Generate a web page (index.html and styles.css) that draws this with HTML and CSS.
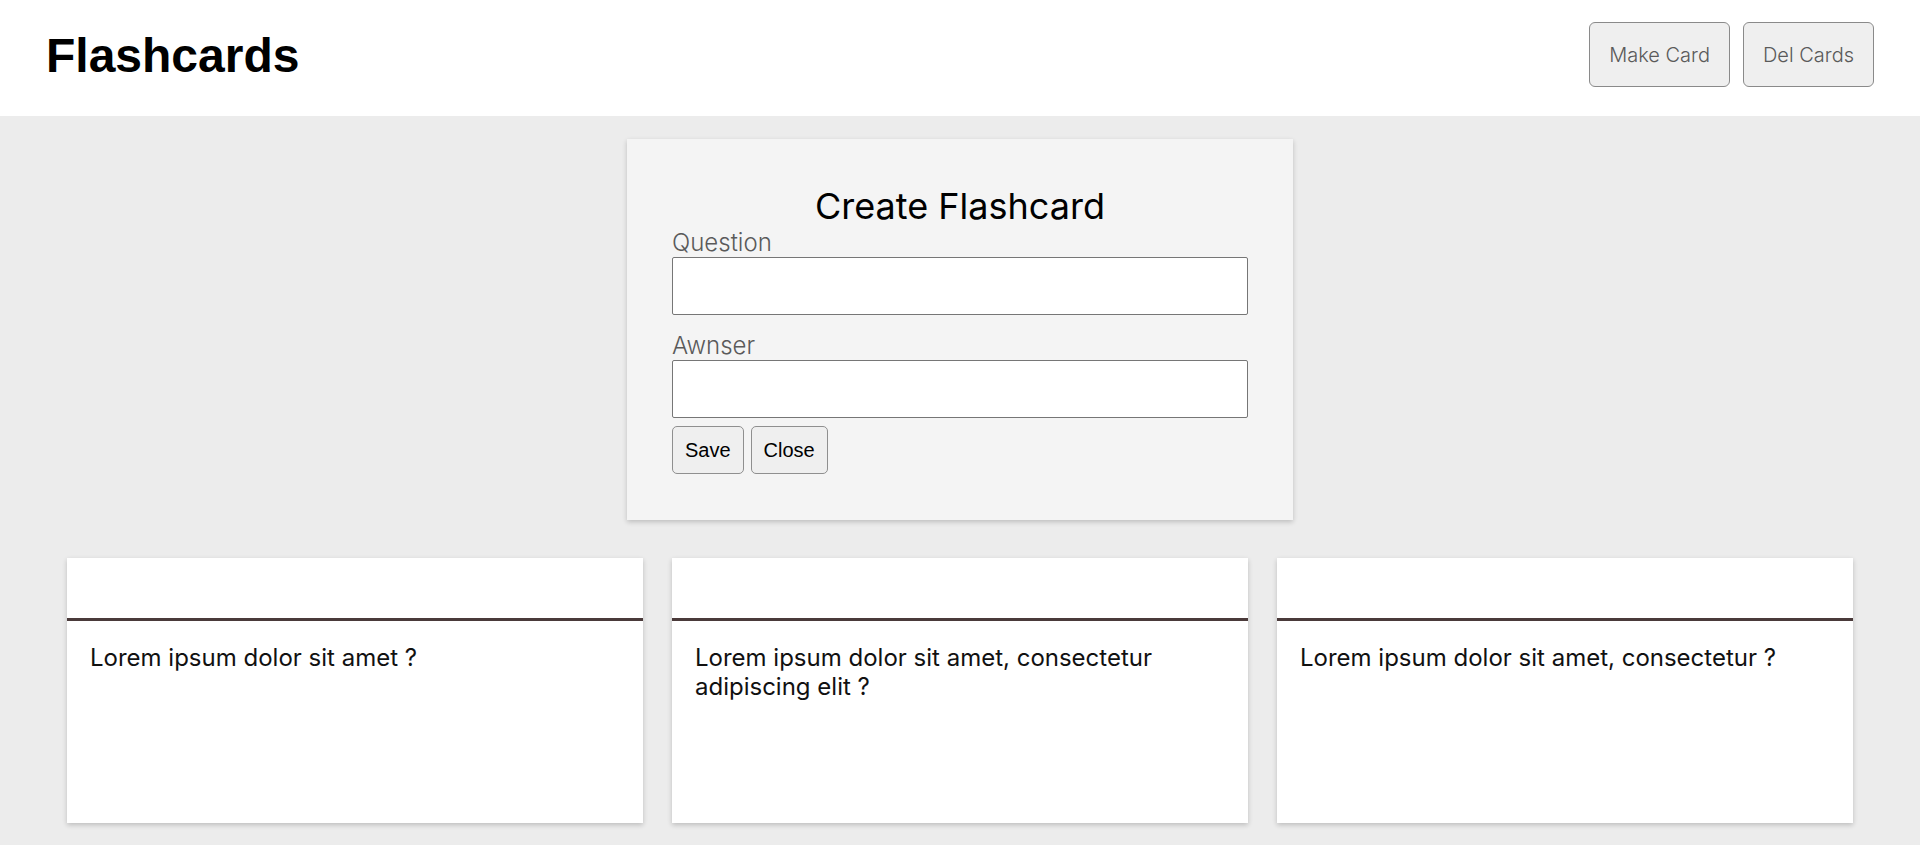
FILE: index.html
```html
<!DOCTYPE html>
<html lang="en">
<head>
<meta charset="utf-8">
<title>Flashcards</title>
<link rel="stylesheet" href="styles.css">
</head>
<body>
<header class="topbar">
  <h1 class="brand">Flashcards</h1>
  <div class="top-actions">
    <button class="top-btn">Make Card</button>
    <button class="top-btn">Del Cards</button>
  </div>
</header>
<main class="main">
  <section class="create-box">
    <h2 class="create-title">Create Flashcard</h2>
    <label class="field-label" for="q">Question</label>
    <input class="field-input field-first" id="q" type="text">
    <label class="field-label" for="a">Awnser</label>
    <input class="field-input" id="a" type="text">
    <div class="form-actions">
      <button class="form-btn">Save</button>
      <button class="form-btn">Close</button>
    </div>
  </section>
  <section class="cards">
    <article class="card">
      <div class="card-head"></div>
      <div class="card-body">Lorem ipsum dolor sit amet ?</div>
    </article>
    <article class="card">
      <div class="card-head"></div>
      <div class="card-body">Lorem ipsum dolor sit amet, consectetur adipiscing elit ?</div>
    </article>
    <article class="card">
      <div class="card-head"></div>
      <div class="card-body">Lorem ipsum dolor sit amet, consectetur ?</div>
    </article>
  </section>
</main>
</body>
</html>
```
FILE: styles.css
```css
* { box-sizing: border-box; }
html, body { margin: 0; padding: 0; }
body {
  background: #ececec;
  font-family: Inter, "Liberation Sans", sans-serif;
  color: #000;
  min-height: 845px;
}
.topbar {
  height: 116px;
  background: #fff;
  display: flex;
  justify-content: space-between;
  align-items: flex-start;
  padding: 22px 46px 0 46px;
}
.brand {
  margin: 6px 0 0 0;
  font-family: "Liberation Sans", Arial, sans-serif;
  font-weight: 700;
  font-size: 48px;
  line-height: 55px;
}
.top-actions {
  display: flex;
  gap: 13px;
}
.top-btn {
  height: 65px;
  padding: 0 19px;
  font-family: Inter, sans-serif;
  font-weight: 300;
  font-size: 20px;
  color: #5a5a5a;
  background: #efefef;
  border: 1px solid #8a8a8a;
  border-radius: 6px;
}
.main {
  display: flex;
  flex-direction: column;
  align-items: center;
  padding-top: 23px;
}
.create-box {
  background: #f4f4f4;
  padding: 45px 45px 46px 45px;
  box-shadow: 0 2px 5px rgba(0,0,0,0.2);
  display: flex;
  flex-direction: column;
  width: 666px;
}
.create-title {
  margin: 0;
  font-weight: 400;
  font-size: 36px;
  line-height: 45px;
  text-align: center;
}
.field-label {
  display: block;
  font-weight: 300;
  font-size: 24px;
  line-height: 28px;
  color: #5a5a5a;
}
.field-input {
  width: 576px;
  height: 58px;
  border: 1px solid #767676;
  border-radius: 2px;
  background: #fff;
  margin: 0;
  font-size: 20px;
}
.field-first { margin-bottom: 17px; }
.form-actions {
  display: flex;
  gap: 7px;
  margin-top: 8px;
}
.form-btn {
  font-family: "Liberation Sans", Arial, sans-serif;
  font-size: 20px;
  line-height: 23px;
  padding: 11.5px 12px;
  color: #000;
  background: #efefef;
  border: 1px solid #8f8f8f;
  border-radius: 5px;
}
.cards {
  display: flex;
  justify-content: center;
  gap: 29px;
  margin-top: 38px;
  width: 100%;
}
.card {
  width: 576px;
  height: 265px;
  background: #fff;
  box-shadow: 0 2px 5px rgba(0,0,0,0.2);
  display: flex;
  flex-direction: column;
}
.card-head {
  height: 63px;
  border-bottom: 3px solid #4a3a3a;
}
.card-body {
  padding: 22px 23px;
  font-size: 24px;
  line-height: 29px;
  color: #111;
}
```
